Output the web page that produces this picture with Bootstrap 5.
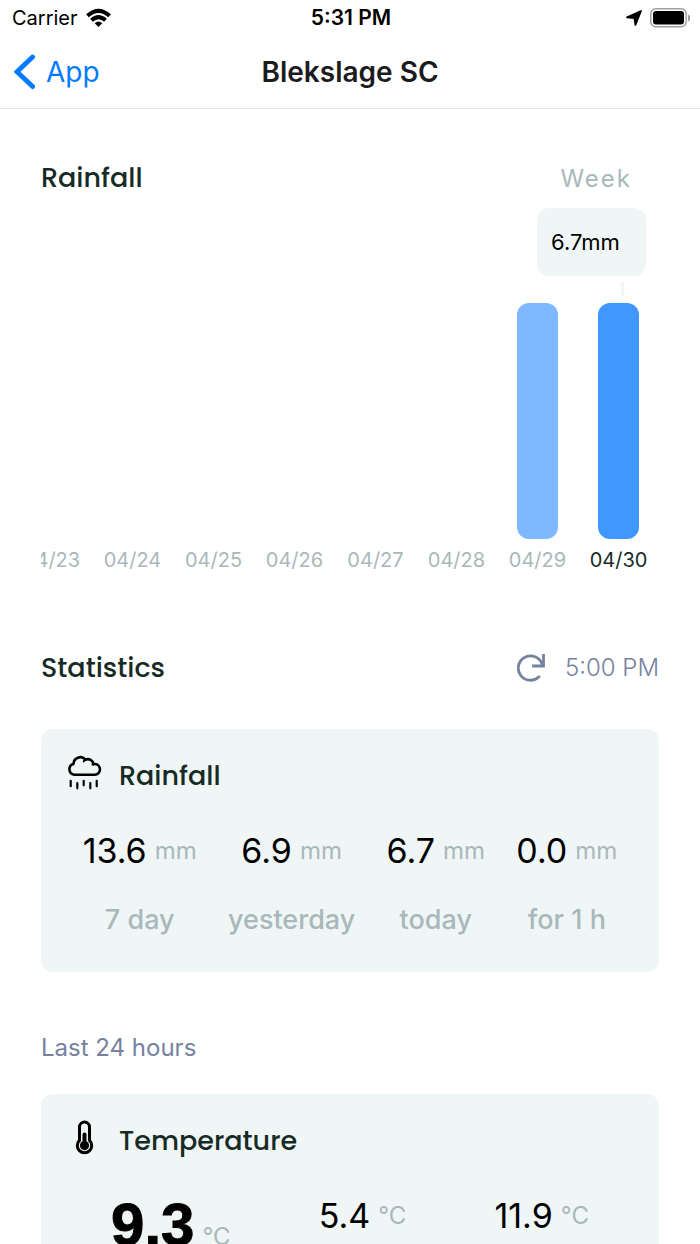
<!DOCTYPE html>
<html lang="en">
<head>
<meta charset="utf-8">
<meta name="viewport" content="width=device-width, initial-scale=1">
<title>Blekslage SC</title>
<link href="https://cdn.jsdelivr.net/npm/bootstrap@5.3.0/dist/css/bootstrap.min.css" rel="stylesheet">
<style>
  body { font-family: Inter, "Liberation Sans", sans-serif; color: #000; background: #fff; line-height: 32px; }
  .status-bar { height: 36px; font-size: 20px; padding: 0 10px 0 12px; }
  .status-bar > * { flex: 1 1 0; }
  .clock { font-size: 21px; }
  .title-bar { height: 73px; padding: 0 14px; border-bottom: 1px solid #e6e6e8; }
  .title-bar > * { flex: 1 1 0; }
  .back-link { color: #007aff; font-size: 28px; }
  .page-title { font-size: 28px; font-weight: 600; color: #1c1c1e; line-height: 36px; }
  .page-scroll { min-height: 0; overflow-y: auto; scrollbar-width: none; padding: 51px 41px 40px; }
  .heading { font-family: Poppins, Inter, sans-serif; font-size: 27px; font-weight: 500; line-height: 36px; color: #172b26; }
  .range-btn { font-size: 24px; letter-spacing: 2px; line-height: 38px; color: #a9b8bb; padding: 0 27px 0 0; }
  .range-row { height: 36px; }
  .chart { height: 368px; margin-top: 12px; }
  .strip { height: 368px; }
  .day { flex: 0 0 81px; font-size: 20px; color: #a9b8bb; }
  .day.selected { color: #172b26; }
  .bar { width: 41px; border-radius: 12px; background: #7eb8ff; margin-bottom: 5px; }
  .selected .bar { background: #4097ff; }
  .tip { top: 0; right: 13px; width: 109px; height: 68px; padding: 0 14px; border-radius: 12px; background: #f0f6f6; font-size: 22px; }
  .tip::after { content: ""; position: absolute; right: 22px; top: 74px; width: 3px; height: 14px; background: #f0f6f6; }
  .stats-head { margin: 74px 0 43px; }
  .refresh { color: #76829f; font-size: 24px; font-weight: 300; gap: 20px; }
  .panel { background: #f0f6f6; border-radius: 12px; padding: 23px 26px 34px; }
  .panel-title { gap: 16px; height: 47px; }
  .panel-title svg { flex: none; align-self: flex-start; }
  .values { margin-top: 28px; }
  .value { display: flex; align-items: center; justify-content: center; font-size: 34px; line-height: 48px; height: 48px; gap: 8px; }
  .value-lg { height: auto; align-items: baseline; font-family: "Liberation Sans", sans-serif; font-size: 60px; font-weight: 700; line-height: 66px; -webkit-text-stroke: 1px #000; }
  .unit { font-family: Inter, "Liberation Sans", sans-serif; font-size: 24px; font-weight: 400; color: #a9b8bb; -webkit-text-stroke: 0; }
  .caption-text { font-size: 27px; font-weight: 500; line-height: 36px; color: #a9b8bb; margin-top: 27px; }
  .period { color: #76829f; font-size: 24px; margin: 60px 0 30px; }
</style>
</head>
<body class="vh-100 d-flex flex-column overflow-hidden">

<div class="status-bar d-flex align-items-center flex-shrink-0">
  <div class="d-flex align-items-center gap-2">
    <span>Carrier</span>
    <svg width="25" height="20" viewBox="0 0 25 20" fill="none" stroke="#000" stroke-width="4">
      <path d="M1.400 7.800Q12.500-2.200 23.600 7.800"/><path d="M5.500 12.300Q12.500 6 19.500 12.300"/>
      <path d="M8.700 15.300Q12.500 11.700 16.300 15.300L12.500 19Z" fill="#000" stroke="none"/>
    </svg>
  </div>
  <div class="clock text-center fw-semibold">5:31 PM</div>
  <div class="d-flex align-items-center justify-content-end gap-2">
    <svg width="16" height="16" viewBox="0 0 16 16"><path d="M15 1 9.400 14.800 8.400 8.200 1 7.400Z" fill="#000" stroke="#000" stroke-width="1.800" stroke-linejoin="round"/></svg>
    <svg width="40" height="20" viewBox="0 0 40 20"><rect x=".8" y=".8" width="35.400" height="18" rx="5" fill="none" stroke="#a0a0a0" stroke-width="1.500"/><rect x="3" y="3" width="31" height="13.500" rx="3" fill="#000"/><path d="M38 6.500Q40.500 7.500 40.500 10T38 13.500Z" fill="#a0a0a0"/></svg>
  </div>
</div>

<header class="title-bar d-flex align-items-center flex-shrink-0">
  <div class="d-flex">
    <a class="back-link d-flex align-items-center text-decoration-none" href="#">
      <svg class="me-2" width="24" height="36" viewBox="0 0 24 36" fill="none" stroke="currentColor" stroke-width="4.800" stroke-linecap="round"><path d="M18.600 3 3 17.800 18.600 32.600"/></svg>
      App
    </a>
  </div>
  <h1 class="page-title text-nowrap text-center m-0">Blekslage SC</h1>
  <div></div>
</header>

<main class="page-scroll flex-grow-1">
  <section>
    <div class="range-row d-flex justify-content-between">
      <h2 class="heading m-0">Rainfall</h2>
      <button type="button" class="range-btn btn border-0">Week</button>
    </div>
    <div class="chart position-relative">
      <div class="strip d-flex justify-content-end overflow-hidden text-center">
        <div class="day d-flex flex-column align-items-center justify-content-end">04/23</div>
        <div class="day d-flex flex-column align-items-center justify-content-end">04/24</div>
        <div class="day d-flex flex-column align-items-center justify-content-end">04/25</div>
        <div class="day d-flex flex-column align-items-center justify-content-end">04/26</div>
        <div class="day d-flex flex-column align-items-center justify-content-end">04/27</div>
        <div class="day d-flex flex-column align-items-center justify-content-end">04/28</div>
        <div class="day d-flex flex-column align-items-center justify-content-end"><div class="bar" style="height:236px"></div>04/29</div>
        <div class="day selected d-flex flex-column align-items-center justify-content-end"><div class="bar" style="height:236px"></div>04/30</div>
      </div>
      <div class="tip position-absolute d-flex align-items-center">6.7mm</div>
    </div>
  </section>

  <section>
    <div class="stats-head d-flex justify-content-between align-items-center">
      <h2 class="heading m-0">Statistics</h2>
      <button type="button" class="refresh btn border-0 p-0 d-flex align-items-center">
        <svg width="28" height="28" viewBox="0 0 28 28" fill="none" stroke="currentColor" stroke-width="2.800" stroke-linecap="round"><path d="M22 22.800A12.200 12.200 0 1 1 25.300 11"/><path d="M26.500 1.500V12H16.500" stroke-linecap="square"/></svg>
        5:00 PM
      </button>
    </div>
    <div class="panel">
      <div class="panel-title d-flex align-items-center">
        <svg width="36" height="40" viewBox="0 0 36 40" fill="none" stroke="#000" stroke-width="2.600" stroke-linecap="round" stroke-linejoin="round"><path d="M7.200 22.700H28A5.400 5.400 0 0 0 28.500 12Q27.500 11.800 26.500 12.300A5.700 5.700 0 0 0 18.500 7.700 6.800 6.800 0 0 0 6.500 12.100 5.400 5.400 0 0 0 7.200 22.700Z"/><path d="M18.500 7.700Q17 8.300 16.700 9.500M26.500 12.300Q26 12.300 25.500 12.500" stroke-width="2"/><path d="M3.700 28.800v5.400M10.300 31v5.300M16.700 28.800v4.500M23.300 31v5.300M29.700 28.800v5.400" stroke-width="2.200"/></svg>
        <h3 class="heading m-0">Rainfall</h3>
      </div>
      <div class="values d-flex justify-content-around text-center text-nowrap">
        <div><div class="value">13.6<span class="unit">mm</span></div><div class="caption-text">7 day</div></div>
        <div><div class="value">6.9<span class="unit">mm</span></div><div class="caption-text">yesterday</div></div>
        <div><div class="value">6.7<span class="unit">mm</span></div><div class="caption-text">today</div></div>
        <div><div class="value">0.0<span class="unit">mm</span></div><div class="caption-text">for 1 h</div></div>
      </div>
    </div>
  </section>

  <section>
    <p class="period">Last 24 hours</p>
    <div class="panel">
      <div class="panel-title d-flex align-items-center">
        <svg width="36" height="40" viewBox="0 0 36 40"><path d="M12.500 23.400V10a5 5 0 0 1 10 0V23.400a7.200 7.200 0 1 1-10 0Z" fill="none" stroke="#000" stroke-width="3"/><path d="M17.500 17.500V28" stroke="#000" stroke-width="4" stroke-linecap="round"/><circle cx="17.500" cy="28.600" r="4.600"/></svg>
        <h3 class="heading m-0">Temperature</h3>
      </div>
      <div class="values d-flex justify-content-around text-center text-nowrap">
        <div class="value value-lg">9.3<span class="unit">°C</span></div>
        <div class="value">5.4<span class="unit">°C</span></div>
        <div class="value">11.9<span class="unit">°C</span></div>
      </div>
    </div>
  </section>
</main>

<script src="https://cdn.jsdelivr.net/npm/bootstrap@5.3.0/dist/js/bootstrap.bundle.min.js"></script>
</body>
</html>
